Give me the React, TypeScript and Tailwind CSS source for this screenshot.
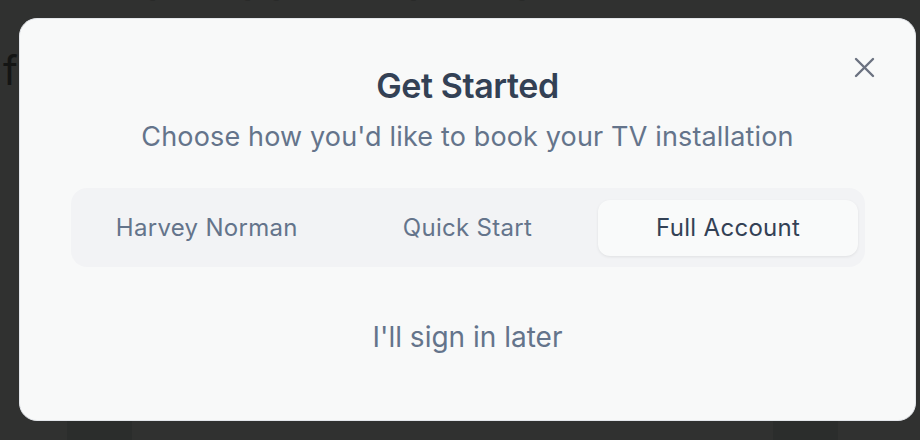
import React from "react";

export default function App() {
  const tabs = ["Harvey Norman", "Quick Start", "Full Account"];
  const active = 2;
  return (
    <div
      className="relative w-[920px] h-[440px] overflow-hidden bg-[#303130]"
      style={{ fontFamily: "Inter, 'Noto Sans', sans-serif" }}
    >
      {/* background page (behind the overlay) */}
      <div className="flex flex-col">
        <div className="-mt-[47px] h-[44px] pl-[140px] text-[44px] leading-[44px] font-semibold text-[#151615] whitespace-nowrap tracking-wide">
          gy eggy q pgy p g
        </div>
        <div className="mt-[50px] pl-[3px] text-[40px] leading-[48px] text-[#141514] whitespace-nowrap">
          f
        </div>
      </div>
      <div className="absolute left-[67px] bottom-0 w-[65px] h-[20px] bg-[#2b2d2c]" />
      <div className="absolute left-[773px] bottom-0 w-[65px] h-[20px] bg-[#2b2d2c]" />

      {/* dialog */}
      <div className="absolute left-[19px] top-[18px] w-[897px] h-[403px] rounded-[18px] border border-[#e3e6ea] bg-[#f8f9f9] flex flex-col items-center pt-[47px]">
        <button className="absolute right-[41px] top-[39px] w-[19px] h-[19px] text-[#6b7280]" aria-label="Close">
          <svg width="19" height="19" viewBox="0 0 19 19" overflow="visible" fill="none" stroke="currentColor" strokeWidth="2.4" strokeLinecap="round">
            <line x1="1" y1="1" x2="18" y2="18" />
            <line x1="18" y1="1" x2="1" y2="18" />
          </svg>
        </button>

        <h2 className="text-[34px] leading-[40px] font-semibold tracking-[-0.4px] text-[#334155]">
          Get Started
        </h2>
        <p className="mt-[14px] text-[27px] leading-[34px] tracking-[0.15px] text-[#64748b]">
          Choose how you'd like to book your TV installation
        </p>

        <div className="mt-[34px] w-[794px] rounded-[16px] bg-[#f2f3f5] px-[6px] pt-[12px] pb-[11px] grid grid-cols-3">
          {tabs.map((t, i) => (
            <div
              key={t}
              className={
                i === active
                  ? "h-[56px] rounded-[12px] bg-[#f9fafa] shadow-[0_1px_3px_rgba(0,0,0,0.08)] flex items-center justify-center text-[24px] tracking-[0.3px] text-[#334155]"
                  : "h-[56px] rounded-[12px] flex items-center justify-center text-[24px] tracking-[0.3px] text-[#64748b]"
              }
            >
              {t}
            </div>
          ))}
        </div>

        <div className="mt-[52px] text-[28px] leading-[36px] text-[#64748b]">
          I'll sign in later
        </div>
      </div>
    </div>
  );
}
